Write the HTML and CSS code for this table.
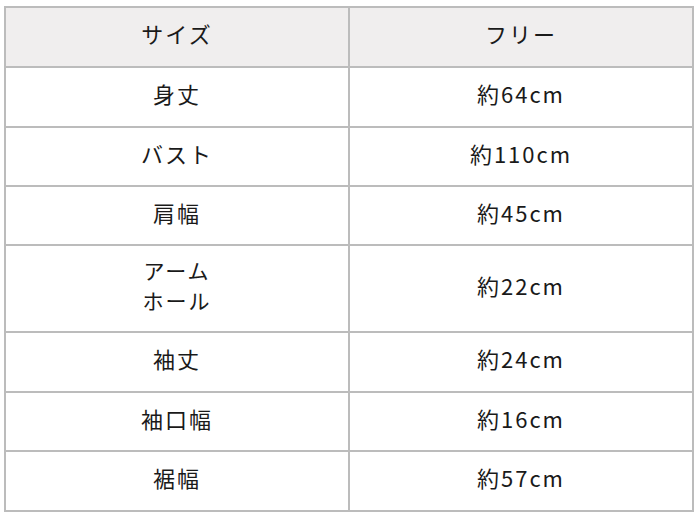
FILE: index.html
```html
<!DOCTYPE html>
<html lang="ja">
<head>
<meta charset="utf-8">
<link rel="stylesheet" href="styles.css">
</head>
<body>
<table class="size-table">
  <tr class="r58 head"><td>サイズ</td><td>フリー</td></tr>
  <tr class="r58"><td>身丈</td><td>約64cm</td></tr>
  <tr class="r57"><td>バスト</td><td>約110cm</td></tr>
  <tr class="r57"><td>肩幅</td><td>約45cm</td></tr>
  <tr class="r85"><td class="two-line">アーム<br>ホール</td><td>約22cm</td></tr>
  <tr class="r58"><td>袖丈</td><td>約24cm</td></tr>
  <tr class="r57"><td>袖口幅</td><td>約16cm</td></tr>
  <tr class="r58"><td>裾幅</td><td>約57cm</td></tr>
</table>
</body>
</html>
```
FILE: styles.css
```css
html, body {
  margin: 0;
  padding: 0;
  background: #ffffff;
}
body {
  padding: 6px 0 0 4px;
  font-family: "Noto Sans CJK JP", "Noto Sans", sans-serif;
  color: #1a1a1a;
}
.size-table {
  border-collapse: separate;
  border-spacing: 0;
  width: 690px;
  table-layout: fixed;
  border-top: 2px solid #bcbcbc;
  border-left: 2px solid #bcbcbc;
}
.size-table td {
  border-right: 2px solid #bcbcbc;
  border-bottom: 2px solid #bcbcbc;
  padding: 0 0 8px 0;
  text-align: center;
  vertical-align: middle;
  font-size: 22px;
  letter-spacing: 2px;
  line-height: 28px;
  width: 342px;
}
.size-table td.two-line {
  font-size: 21px;
  line-height: 30px;
}
.head td {
  background: #f0eeee;
}
.r58 td { height: 50px; }
.r57 td { height: 49px; }
.r85 td { height: 77px; }
```
